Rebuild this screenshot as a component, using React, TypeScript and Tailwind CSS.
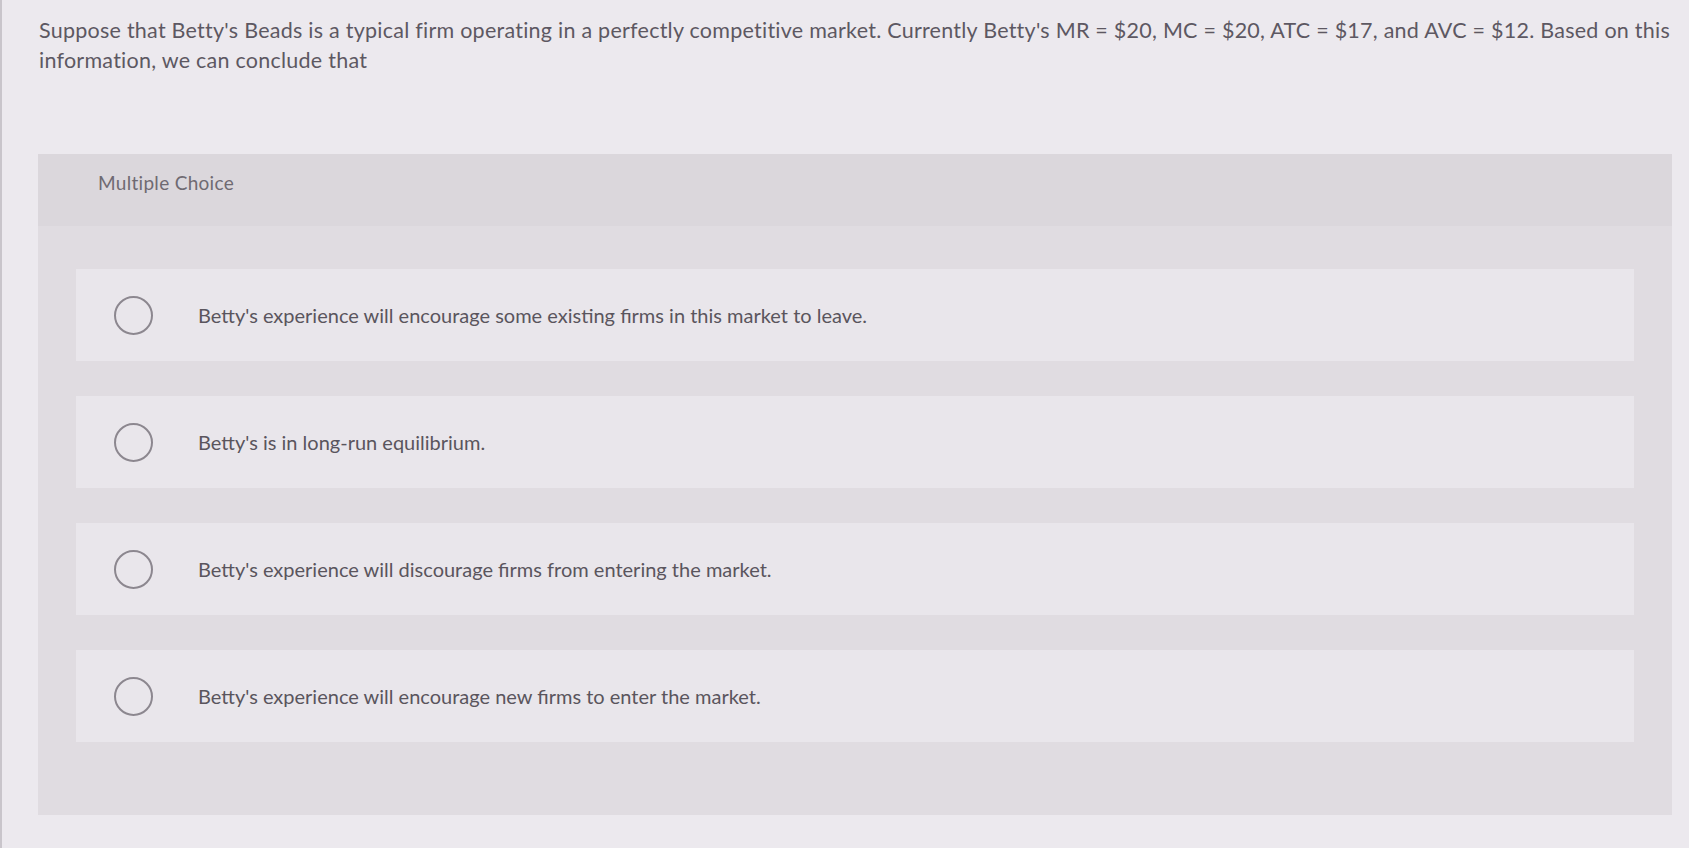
const options = [
  "Betty's experience will encourage some existing firms in this market to leave.",
  "Betty's is in long-run equilibrium.",
  "Betty's experience will discourage firms from entering the market.",
  "Betty's experience will encourage new firms to enter the market.",
];

export default function App() {
  return (
    <div className="min-h-[848px] w-full bg-[#ece9ee] font-['Lato','Open_Sans',sans-serif] border-l-2 border-[#c9c5cb]">
      <div className="pl-[37px] pr-[6px] pt-[15px]">
        <p className="text-[21.5px] leading-[30px] tracking-[0.25px] text-[#5d5862]">
          Suppose that Betty's Beads is a typical firm operating in a perfectly competitive market. Currently Betty's MR = $20, MC = $20, ATC = $17, and AVC = $12. Based on this information, we can conclude that
        </p>
      </div>

      <div className="ml-[36px] mr-[17px] mt-[79px] bg-[#e0dce1] pb-[73px]">
        <div className="h-[72px] bg-[#dbd7dc] pl-[60px] pt-[17px]">
          <span className="text-[19px] leading-[23px] tracking-[0.3px] text-[#6f6a72]">Multiple Choice</span>
        </div>

        <div className="pt-[43px] flex flex-col gap-[35px]">
          {options.map((opt) => (
            <label
              key={opt}
              className="mx-[38px] h-[92px] bg-[#e9e6eb] flex items-center pl-[38px] cursor-pointer"
            >
              <span className="w-[39px] h-[39px] rounded-full border-2 border-[#8c878f] shrink-0" />
              <span className="ml-[45px] text-[20px] text-[#5a555d]">{opt}</span>
            </label>
          ))}
        </div>
      </div>
    </div>
  );
}
